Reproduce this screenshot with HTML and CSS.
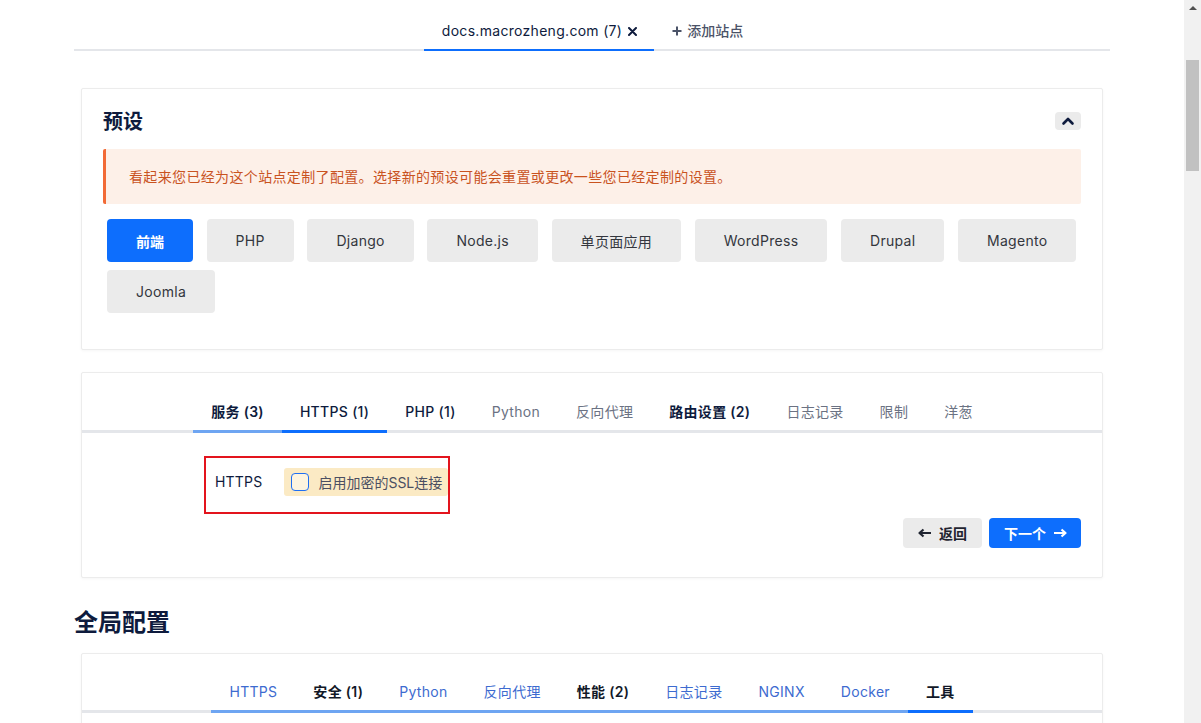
FILE: index.html
```html
<!DOCTYPE html>
<html lang="zh-CN">
<head>
<meta charset="utf-8">
<title>docs.macrozheng.com</title>
<link rel="stylesheet" href="styles.css">
</head>
<body>
<div class="viewport">
<div class="page">
  <nav class="site-tabs">
    <a class="site-tab active"><span class="site-name">docs.macrozheng.com (7)</span>
      <svg class="x-icon" width="9" height="9" viewBox="0 0 9 9"><path d="M1 1 L8 8 M8 1 L1 8" stroke="#0e1b3d" stroke-width="2" stroke-linecap="round"/></svg>
    </a>
    <a class="site-tab add">
      <svg class="plus-icon" width="10" height="10" viewBox="0 0 10 10"><path d="M5 0.5 V9.5 M0.5 5 H9.5" stroke="#4b5368" stroke-width="2"/></svg>
      添加站点
    </a>
  </nav>

  <section class="card preset">
    <div class="card-head">
      <h2 class="card-title">预设</h2>
      <button class="collapse-btn" aria-label="收起">
        <svg width="14" height="10" viewBox="0 0 14 10"><path d="M2.5 7.5 L7 3 L11.5 7.5" fill="none" stroke="#0e1b3d" stroke-width="2.6" stroke-linecap="round" stroke-linejoin="round"/></svg>
      </button>
    </div>
    <div class="alert">看起来您已经为这个站点定制了配置。选择新的预设可能会重置或更改一些您已经定制的设置。</div>
    <div class="presets">
      <button class="preset-btn selected">前端</button>
      <button class="preset-btn">PHP</button>
      <button class="preset-btn">Django</button>
      <button class="preset-btn">Node.js</button>
      <button class="preset-btn">单页面应用</button>
      <button class="preset-btn">WordPress</button>
      <button class="preset-btn">Drupal</button>
      <button class="preset-btn">Magento</button>
      <button class="preset-btn">Joomla</button>
    </div>
  </section>

  <section class="card wizard">
    <nav class="tabs">
      <a class="tab done strong">服务 (3)</a>
      <a class="tab active dark">HTTPS (1)</a>
      <a class="tab dark">PHP (1)</a>
      <a class="tab">Python</a>
      <a class="tab">反向代理</a>
      <a class="tab strong">路由设置 (2)</a>
      <a class="tab">日志记录</a>
      <a class="tab">限制</a>
      <a class="tab">洋葱</a>
    </nav>
    <div class="tab-body">
      <div class="field-row">
        <span class="field-label">HTTPS</span>
        <label class="check-chip"><span class="checkbox"></span>启用加密的SSL连接</label>
      </div>
      <div class="actions">
        <button class="btn btn-back">
          <svg width="14" height="10" viewBox="0 0 14 10"><path d="M13 5 H2 M5.5 1.5 L1.5 5 L5.5 8.5" fill="none" stroke="#1f2430" stroke-width="2.2" stroke-linejoin="round"/></svg>
          返回
        </button>
        <button class="btn btn-next">
          下一个
          <svg width="14" height="10" viewBox="0 0 14 10"><path d="M1 5 H12 M8.5 1.5 L12.5 5 L8.5 8.5" fill="none" stroke="#ffffff" stroke-width="2.2" stroke-linejoin="round"/></svg>
        </button>
      </div>
    </div>
  </section>

  <h1 class="section-title">全局配置</h1>

  <section class="card global">
    <nav class="tabs">
      <a class="tab done link">HTTPS</a>
      <a class="tab done strong-dark">安全 (1)</a>
      <a class="tab done link">Python</a>
      <a class="tab done link">反向代理</a>
      <a class="tab done strong-dark">性能 (2)</a>
      <a class="tab done link">日志记录</a>
      <a class="tab done link">NGINX</a>
      <a class="tab done link">Docker</a>
      <a class="tab active strong-dark">工具</a>
    </nav>
    <div class="tab-body tall"></div>
  </section>
</div>
</div>
<div class="scrollbar">
  <div class="scroll-arrow"></div>
  <div class="scroll-thumb"></div>
</div>
</body>
</html>
```

FILE: styles.css
```css
* { box-sizing: border-box; }

html, body {
  margin: 0;
  padding: 0;
  background: #ffffff;
  height: 723px;
  overflow: hidden;
}

body {
  display: flex;
  font-family: Inter, "Noto Sans CJK SC", sans-serif;
  font-size: 14px;
  color: #0e1b3d;
}

button {
  font-family: inherit;
  border: none;
  cursor: pointer;
}

.viewport {
  flex: 1;
  height: 723px;
  overflow: hidden;
}

/* fake window scrollbar */
.scrollbar {
  width: 17px;
  height: 723px;
  flex: none;
  background: #f1f1f1;
  display: flex;
  flex-direction: column;
  align-items: center;
}

.scroll-arrow {
  margin-top: 6px;
  width: 0;
  height: 0;
  border-left: 4px solid transparent;
  border-right: 4px solid transparent;
  border-bottom: 4px solid #505050;
}

.scroll-thumb {
  margin-top: 50px;
  width: 13px;
  height: 111px;
  background: #c1c1c1;
}

.page {
  width: 1036px;
  margin: 0 auto;
  padding-bottom: 40px;
}

/* site tabs */
.site-tabs {
  display: flex;
  justify-content: center;
  border-bottom: 2px solid #e4e6ea;
}

.site-tab {
  display: flex;
  align-items: center;
  gap: 6px;
  padding: 21px 17px 8px 18px;
  line-height: 20px;
  margin-bottom: -2px;
  border-bottom: 2px solid transparent;
  color: #0e1b3d;
  font-size: 14px;
}

.site-name { letter-spacing: 0.3px; }

.site-tab.active {
  border-bottom-color: #0d6efd;
}

.site-tab.add {
  color: #4b5368;
  font-weight: 500;
  gap: 5px;
}

.x-icon { margin-top: 1px; }

/* cards */
.card {
  margin: 0 7px;
  border: 1px solid #ececec;
  border-radius: 2px;
  box-shadow: 0 1px 3px rgba(0, 0, 0, 0.04);
  background: #fff;
}

.preset {
  margin-top: 37px;
  padding: 19px 21px 36px 21px;
}

.card-head {
  display: flex;
  align-items: center;
  justify-content: space-between;
}

.card-title {
  margin: 0;
  font-size: 20px;
  line-height: 29px;
  font-weight: 700;
  color: #0e1b3d;
}

.collapse-btn {
  width: 26px;
  height: 18px;
  border-radius: 4px;
  background: #ebebeb;
  display: flex;
  align-items: center;
  justify-content: center;
  padding: 0;
  margin-top: -4px;
}

.alert {
  margin-top: 12px;
  background: #fdf0e8;
  border-left: 3px solid #f26a36;
  border-radius: 2px;
  padding: 17px 23px;
  line-height: 21px;
  font-size: 14px;
  letter-spacing: 0.35px;
  color: #c9531f;
}

.presets {
  margin-top: 15px;
  padding-left: 4px;
  display: flex;
  flex-wrap: wrap;
  gap: 8px 13.6px;
}

.preset-btn {
  height: 43px;
  padding: 0 29px;
  border-radius: 4px;
  background: #ebebeb;
  color: #33363d;
  font-size: 14px;
  letter-spacing: 0.3px;
}

.preset-btn.selected {
  background: #0d6efd;
  color: #fff;
  font-weight: 700;
  letter-spacing: 0;
}

/* tabs */
.tabs {
  display: flex;
  justify-content: center;
  border-bottom: 3px solid #e4e6ea;
}

.tab {
  padding: 0 18px 8px;
  line-height: 20px;
  font-size: 14px;
  letter-spacing: 0.3px;
  margin-bottom: -3px;
  border-bottom: 3px solid transparent;
  color: #6b7283;
  white-space: nowrap;
}

.tab.dark { color: #0e1b3d; font-weight: 500; }
.tab.strong { color: #0e1b3d; font-weight: 600; }
.tab.strong-dark { color: #111827; font-weight: 600; }
.tab.link { color: #3d6bd0; }
.tab.done { border-bottom-color: #6ea5f2; }
.tab.active { border-bottom-color: #0d6efd; }

.global .tab.done { box-shadow: inset -1px 0 0 #fff; }

.wizard {
  margin-top: 22px;
  padding-top: 29px;
}

.wizard .tab-body {
  padding: 23px 21px 29px 21px;
}

.field-row {
  margin-left: 101px;
  width: 246px;
  display: flex;
  align-items: center;
  gap: 22px;
  border: 2px solid #e3141d;
  padding: 10px 12px 16px 9px;
}

.field-label {
  line-height: 28px;
  color: #0e1b3d;
  font-size: 14px;
  letter-spacing: 0.2px;
}

.check-chip {
  display: flex;
  align-items: center;
  gap: 9px;
  height: 28px;
  padding: 0 6px 0 7px;
  background: #fbeac4;
  border-radius: 3px;
  color: #4b4f62;
  font-size: 14px;
  white-space: nowrap;
}

.checkbox {
  width: 18px;
  height: 18px;
  border: 1.5px solid #1f6ff2;
  border-radius: 4px;
  background: #fdf4df;
}

.actions {
  margin-top: 4px;
  display: flex;
  justify-content: flex-end;
  gap: 7px;
}

.btn {
  height: 30px;
  display: flex;
  align-items: center;
  gap: 7px;
  border-radius: 4px;
  font-size: 14px;
  font-weight: 700;
}

.btn-back {
  background: #ebebeb;
  color: #1f2430;
  padding: 0 15px;
}

.btn-next {
  background: #0d6efd;
  color: #fff;
  padding: 0 14px 0 15px;
}

.section-title {
  margin: 28px 0 13px;
  font-size: 24px;
  line-height: 34px;
  font-weight: 700;
  color: #0e1b3d;
}

.global {
  padding-top: 28px;
}

.tab-body.tall {
  height: 220px;
}
```
